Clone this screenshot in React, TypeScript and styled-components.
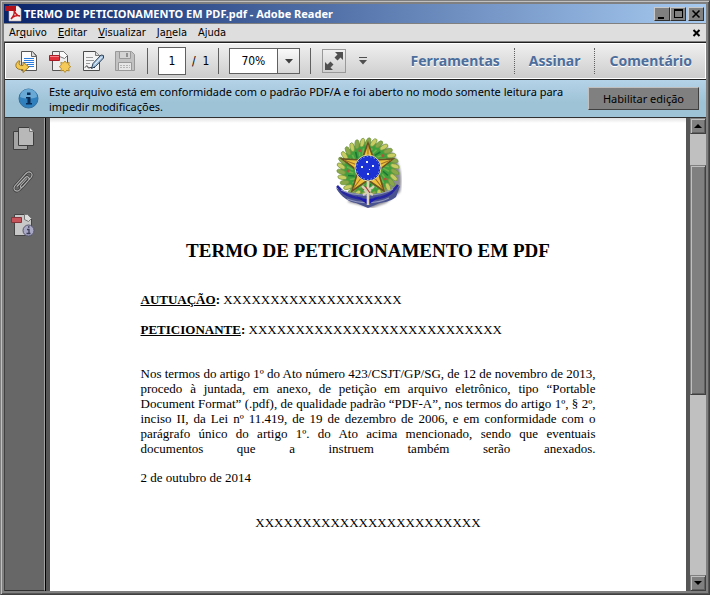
import React from "react";
import styled, { createGlobalStyle } from "styled-components";

const UI = `"DejaVu Sans Condensed", "Noto Sans", Tahoma, sans-serif`;
const UI_WIDE = `"Noto Sans", "Open Sans", sans-serif`;
const SERIF = `"Liberation Serif", "Times New Roman", serif`;

const GlobalStyle = createGlobalStyle`
  * { box-sizing: border-box; }
  body { margin: 0; background: #808080; }
  button, input, select { font: inherit; color: inherit; margin: 0; border-radius: 0; }
`;

const Window = styled.div`
  display: flex;
  flex-direction: column;
  height: 100vh;
  padding: 2px 2px 3px 2px;
  background: #808080;
  border: 1px solid;
  border-color: #808080 #404040 #404040 #808080;
  box-shadow: inset 1px 1px 0 #c0c0c0, inset -1px -1px 0 #555555;
  font: 12px/16px ${UI};
  color: #000000;
`;

const TitleBar = styled.header`
  display: flex;
  align-items: center;
  flex: none;
  height: 19px;
  margin: 1px 1px 0;
  padding: 0 2px 0 1px;
  background: linear-gradient(90deg, #0a246a, #a6caf0);
`;

const TitleText = styled.h1`
  flex: 1;
  margin: 0 0 0 2px;
  font: bold 11px/16px ${UI_WIDE};
  color: #ffffff;
  white-space: nowrap;
`;

const CaptionButton = styled.button<{ $apart?: boolean }>`
  display: flex;
  align-items: center;
  justify-content: center;
  width: 16px;
  height: 14px;
  margin-left: ${(p) => (p.$apart ? 2 : 0)}px;
  padding: 0;
  background: #808080;
  border: 1px solid;
  border-color: #c8c8c8 #303030 #303030 #c8c8c8;
`;

const MenuBar = styled.nav`
  display: flex;
  align-items: center;
  flex: none;
  gap: 11px;
  height: 19px;
  margin: 0 1px;
  padding: 0 5px;
  background: #dedede;
  border-top: 1px solid #808080;
  border-bottom: 1px solid #808080;
`;

const MenuItem = styled.button`
  padding: 0;
  background: none;
  border: 0;
  font: 11px/16px ${UI};
  &:last-child { margin-left: auto; display: flex; }
  u { text-underline-offset: 1px; }
`;

const Body = styled.div`
  display: flex;
  flex-direction: column;
  flex: 1;
  min-height: 0;
  margin: 0 1px;
  border-left: 1px solid #404040;
`;

const ToolBar = styled.div`
  display: flex;
  align-items: center;
  flex: none;
  height: 38px;
  padding: 0 14px 0 10px;
  background: linear-gradient(#f0f0f0, #cccccc);
  border-top: 1px solid #202020;
  border-bottom: 1px solid #202020;
  box-shadow: inset 0 0 0 1px #ffffff;
`;

const ToolButton = styled.button<{ $framed?: boolean }>`
  display: flex;
  align-items: center;
  justify-content: center;
  flex: none;
  width: 24px;
  height: 24px;
  margin: ${(p) => (p.$framed ? "0 5px 0 11px" : "0 9px 0 0")};
  padding: 0;
  background: ${(p) => (p.$framed ? "linear-gradient(#efefef, #d0d0d0)" : "none")};
  border: ${(p) => (p.$framed ? "1px solid #999999" : "0")};
`;

const Separator = styled.span`
  flex: none;
  width: 1px;
  height: 26px;
  background: #606060;
`;

const PageField = styled.label`
  display: flex;
  align-items: center;
  gap: 6px;
  margin: 0 9px 0 10px;
  white-space: nowrap;
  input {
    width: 28px;
    height: 28px;
    padding: 0;
    text-align: center;
    background: #ffffff;
    border: 1px solid #606060;
  }
`;

const ZoomBox = styled.div`
  display: flex;
  flex: none;
  width: 71px;
  height: 26px;
  margin: 0 10px;
  background: #ffffff;
  border: 1px solid #606060;
  position: relative;
  select {
    flex: 1;
    padding: 0 31px 0 11px;
    appearance: none;
    background: none;
    border: 0;
  }
`;

const ZoomArrow = styled.span`
  position: absolute;
  top: 0;
  right: 0;
  bottom: 0;
  display: flex;
  align-items: center;
  justify-content: center;
  width: 22px;
  background: linear-gradient(#fafafa, #d8d8d8);
  border-left: 1px solid #606060;
  pointer-events: none;
`;

const Panels = styled.div`
  display: flex;
  margin-left: auto;
`;

const PanelButton = styled.button`
  height: 26px;
  padding: 0 14px;
  background: none;
  border: 0;
  border-left: 1px dotted #606060;
  font: bold 14px/24px ${UI_WIDE};
  color: #4c6e9c;
  text-shadow: 0 1px 0 #ffffff;
  &:first-child { border-left: 0; }
  &:last-child { padding-right: 0; }
`;

const InfoBar = styled.div`
  display: flex;
  align-items: center;
  flex: none;
  height: 38px;
  padding: 0 7px 0 13px;
  background: linear-gradient(#b4d2e8, #9fc3d6 60%);
  border-bottom: 1px solid #303030;
  p {
    flex: 1;
    margin: 0 10px;
    font: 11px/15px ${UI_WIDE};
  }
`;

const EnableButton = styled.button`
  flex: none;
  width: 111px;
  height: 23px;
  padding: 0;
  background: #808080;
  border: 1px solid;
  border-color: #c0c0c0 #404040 #404040 #c0c0c0;
  font: 11px/16px ${UI_WIDE};
`;

const Workspace = styled.div`
  display: flex;
  flex: 1;
  min-height: 0;
`;

const SideBar = styled.aside`
  display: flex;
  flex-direction: column;
  flex: none;
  align-items: center;
  gap: 19px;
  width: 40px;
  padding: 8px 4px 0 0;
  background: #676767;
  border-right: 1px solid #a0a0a0;
  border-bottom: 1px solid #303030;
`;

const SideButton = styled.button`
  display: flex;
  padding: 0;
  background: none;
  border: 0;
`;

const Viewport = styled.div`
  display: flex;
  flex: 1;
  min-width: 0;
  padding: 0 4px;
  background: #555555;
  border-left: 1px solid #000000;
  overflow: hidden;
`;

const Paper = styled.article`
  flex: 1;
  min-width: 0;
  background: linear-gradient(#e2e2e2, #ffffff 5px);
`;

const Column = styled.div`
  display: flex;
  flex-direction: column;
  max-width: 455px;
  margin: 0 auto;
  padding-top: 18px;
  font: 13px/15px ${SERIF};
`;

const Crest = styled.div`
  display: flex;
  justify-content: center;
`;

const Heading = styled.h2`
  margin: 31px 0 29px;
  font: bold 19px/24px ${SERIF};
  text-align: center;
  white-space: nowrap;
`;

const Field = styled.p`
  margin: 0 0 15px;
  text-decoration-thickness: 1px;
`;

const Terms = styled.p`
  margin: 14px 0;
  text-align: justify;
  text-align-last: justify;
`;

const DateLine = styled.p`
  margin: 0 0 30px;
`;

const Signature = styled.p`
  margin: 0;
  text-align: center;
`;

const ScrollBar = styled.div`
  display: flex;
  flex-direction: column;
  flex: none;
  width: 16px;
  background: #c0c0c0;
`;

const ScrollPart = styled.button<{ $thumb?: boolean }>`
  display: flex;
  align-items: center;
  justify-content: center;
  flex: none;
  height: ${(p) => (p.$thumb ? "230px" : "16px")};
  padding: 0;
  background: #808080;
  border: 1px solid;
  border-color: #808080 #404040 #404040 #808080;
  box-shadow: inset 1px 1px 0 #c0c0c0, inset -1px -1px 0 #606060;
`;

const Track = styled.div`
  display: flex;
  flex-direction: column;
  flex: 1;
  min-height: 0;
  padding-top: 31px;
`;

const AdobeMark = () => (
  <svg width="17" height="17" viewBox="0 0 17 17" aria-hidden="true">
    <path d="M4 1h9l3 3v12H4z" fill="#f4eeee" stroke="#b9aaaa" strokeWidth=".6" />
    <path d="M0 1h11v5H0z" fill="#b3121a" />
    <path d="M0 6h2l1 2V6z" fill="#700" />
    <path d="M9 5c1 3 3 6 6 6-3-1-7 0-9 3 2-2 4-6 3-9z" fill="none" stroke="#c4161c" strokeWidth="1.5" />
  </svg>
);

const OpenIcon = () => (
  <svg width="24" height="24" viewBox="0 0 24 24" aria-hidden="true">
    <path d="M6.500 2.500h11l4 4v15h-15z" fill="#fbfbfb" stroke="#555" />
    <path d="M16.500 2.500v5h5l-4-5z" fill="#ddd" stroke="#666" />
    <path d="M9 9.500h10M9 11.500h10M9 13.500h10M12 15.500h7M14 17.500h5" stroke="#2a7de0" strokeWidth="1.200" />
    <path d="M3.500 12C-1 15 0 21.500 8 20.500V23.500l6-5.500-6-5v3.500c-3.500.500-5-1.500-3-4.500z" fill="#f3c94f" stroke="#9a7420" />
  </svg>
);

const CreatePdfIcon = () => (
  <svg width="24" height="24" viewBox="0 0 24 24" aria-hidden="true">
    <path d="M4.500 2.500h11l4 4v15h-15z" fill="#eee" stroke="#555" />
    <path d="M11.500 2.500v5l5 2 3-3-4-4z" fill="#fafafa" stroke="#777" />
    <path d="M1.500 6.500h10v5h-10z" fill="#e2303a" stroke="#a81c25" />
    <path d="M2 7.500h9" stroke="#f58288" />
    <path d="M17 12l1.600 2 2.600-.5-.5 2.600 2 1.600-2 1.600.5 2.600-2.600-.5L17 23.400l-1.600-2-2.600.5.5-2.600-2-1.600 2-1.600-.5-2.600 2.600.5z" fill="#f5ca58" stroke="#a87f22" strokeWidth=".8" />
  </svg>
);

const SignIcon = () => (
  <svg width="24" height="24" viewBox="0 0 24 24" aria-hidden="true">
    <path d="M2.500 2.500h12l4 4v15h-16z" fill="#f4f4f4" stroke="#4c4c4c" />
    <path d="M14.500 2.500v4h4" fill="#ddd" stroke="#777" />
    <path d="M5 8.500h7M5 11.500h8M5 14.500h4" stroke="#999" />
    <path d="M4 18.500c2-3 3-1 3 0s2 0 3 0h4" fill="none" stroke="#222" />
    <path d="M10.500 19.500l1.500-5 8-8.500 2.500.500v2.500l-8 8.500z" fill="#a8c6e4" stroke="#2f4356" />
    <path d="M13.500 15.500l7-7.500" stroke="#eef6fc" />
  </svg>
);

const SaveIcon = () => (
  <svg width="24" height="24" viewBox="0 0 24 24" aria-hidden="true">
    <path d="M1.500 2.500h16l3 3v16h-19z" fill="#c2c2c2" stroke="#999" />
    <path d="M5.500 2.500h11v7h-11z" fill="#d4d4d4" stroke="#999" />
    <path d="M13 4v4" stroke="#909090" strokeWidth="2" />
    <path d="M4.500 13.500h13v8h-13z" fill="#e6e6e6" stroke="#999" />
    <path d="M6 16.500h10M6 18.500h10" stroke="#b4b4b4" strokeDasharray="2 1" />
  </svg>
);

const FullScreenIcon = () => (
  <svg width="22" height="22" viewBox="0 0 22 22" aria-hidden="true">
    <path d="M12 2h8v8l-2.500-2.500-3 3-3-3 3-3zM2 20v-8l2.500 2.500 3-3 3 3-3 3L10 20z" fill="#505050" />
  </svg>
);

const InfoIcon = () => (
  <svg width="21" height="21" viewBox="0 0 21 21" aria-hidden="true">
    <circle cx="10.500" cy="10.500" r="9.500" fill="#2f80bd" stroke="#336f9c" />
    <path d="M2 9a8.500 8 0 0 1 17 0c-5 2-12 2-17 0z" fill="#69a9d6" />
    <path d="M9 4.500h3.500v2.500H9zM8 9h4.500v6H14v1.500H8V15h1.500v-4.500H8z" fill="#0b2d55" />
  </svg>
);

const PagesIcon = () => (
  <svg width="24" height="25" viewBox="0 0 24 25" aria-hidden="true">
    <path d="M2.500 5.500h14v18h-14z" fill="#a4a4a4" stroke="#3e3e3e" />
    <path d="M7.500 1.500h11l4 4v14h-15z" fill="#b8b8b8" stroke="#3e3e3e" />
    <path d="M18.500 1.500v4h4" fill="#ddd" stroke="#777" />
  </svg>
);

const CLIP_PATH =
  "M6 16.500l8.500-9c2-2 5 .5 3 2.800L9 19.500c-3 3.500-8 .5-5.200-3.500L15 3.500c3.500-3.500 8 0 5 4L12 16.500c-2 2-3.500.5-2-1.500l6-6.500";

const ClipIcon = () => (
  <svg width="24" height="24" viewBox="0 0 24 24" fill="none" aria-hidden="true">
    <path d={CLIP_PATH} stroke="#3e3e3e" strokeWidth="2.600" />
    <path d={CLIP_PATH} stroke="#b4b4b4" strokeWidth="1.100" />
  </svg>
);

const DocInfoIcon = () => (
  <svg width="24" height="24" viewBox="0 0 24 24" aria-hidden="true">
    <path d="M3.500 1.500h13l4 4v17h-17z" fill="#c8c8c8" stroke="#444" />
    <path d="M13.500 1.500v5l4 2 3-3-4-4z" fill="#ddd" stroke="#777" />
    <path d="M.5 4.500h10v5H.5z" fill="#c6535a" stroke="#87343a" />
    <circle cx="17.500" cy="17.500" r="5.500" fill="#a9a9c6" stroke="#55556c" />
    <path d="M17 14h1.500M16 16.500h2v4M15.500 20.500h4" fill="none" stroke="#3c3c58" strokeWidth="1.300" />
  </svg>
);

const LEAVES = Array.from({ length: 30 }, (_, i) => i * 12);

const BrazilCrest = () => (
  <svg width="68" height="72" viewBox="0 0 68 72" role="img" aria-label="Brasão da República">
    <defs>
      <filter id="soft" x="-10%" y="-10%" width="120%" height="120%">
        <feGaussianBlur stdDeviation="0.600" />
      </filter>
      <filter id="shade" x="-10%" y="-10%" width="120%" height="120%">
        <feGaussianBlur stdDeviation="1.200" />
      </filter>
    </defs>
    <path d="M48 8c16 8 22 30 18 48L52 67 38 72 14 66z" fill="#8c8c94" filter="url(#shade)" />
    <g filter="url(#soft)">
      <circle cx="34" cy="33" r="27" fill="#3f9f3c" />
      {LEAVES.map((a) => (
        <g key={a} transform={`rotate(${a} 34 33)`}>
          <ellipse cx="34" cy="6" rx="2.200" ry="4.500" transform="rotate(25 34 6)" fill={a % 24 ? "#c9cc62" : "#8aa848"} stroke="#6f9440" strokeWidth=".7" />
          <path d="M34 12l-2.500 6" stroke={a % 36 ? "#6db24a" : "#1f7434"} strokeWidth="1.600" />
          {a % 72 === 48 && <circle cx="34" cy="13" r="1.500" fill="#b0543a" />}
        </g>
      ))}
      <path d="M34 7l6 17 19-1-15 12 6 20-16-11-16 11 6-20L8 23l20 1z" fill="#efc13a" stroke="#6a5224" strokeWidth="1.600" />
      <path d="M34 9v24l23-9-23 9 15 20-15-20-15 20 15-20L10 24l24 9z" fill="none" stroke="#a2712a" strokeWidth="1.100" />
      <path d="M2 52c8 4 19 6 32 6s24-2 32-8l-4 11c-7 5-11 5-16 6l-12 5-12-5C15 66 7 61 2 52z" fill="#4a5290" />
      <path d="M3 50l7 7c6 4 12 5 18 6M64 49l-7 8c-5 4-11 5-17 6" fill="none" stroke="#2626a0" strokeWidth="2.600" />
      <path d="M7 54c15 7 38 7 52-1M13 63c13 5 30 5 42-1" fill="none" stroke="#9197bc" strokeWidth="1.200" />
      <path d="M22 60c8 4 16 4 24 0l-12 9z" fill="#1a1ab4" />
      <path d="M34 45v24" stroke="#dcd4b4" strokeWidth="2.600" />
      <path d="M28 50c3 4 9 4 12 0M29 59l8-5M30 54l9 5" fill="none" stroke="#d8cfb6" strokeWidth="2.200" />
      <path d="M31 50l5 7" stroke="#a53a37" strokeWidth="1.200" />
      <circle cx="34" cy="32" r="13" fill="#132bb7" stroke="#e7d88a" strokeWidth="1" />
      <circle cx="34" cy="32" r="11.500" fill="#1b32d4" stroke="#93a3ee" strokeWidth="1" strokeDasharray="1.500 2" />
      <path d="M32 25h2v2h-2zM27 30h2v2h-2zM38 29h2v2h-2zM33 37h2v2h-2zM35 33h1v1h-1z" fill="#edf3ff" />
    </g>
  </svg>
);

const MENUS = [
  ["Ar", "q", "uivo"],
  ["", "E", "ditar"],
  ["", "V", "isualizar"],
  ["Ja", "n", "ela"],
  ["A", "j", "uda"],
];

const TERMS = [
  "Nos termos do artigo 1º do Ato número 423/CSJT/GP/SG, de 12 de novembro de 2013,",
  "procedo à juntada, em anexo, de petição em arquivo eletrônico, tipo “Portable",
  "Document Format” (.pdf), de qualidade padrão “PDF-A”, nos termos do artigo 1º, § 2º,",
  "inciso II, da Lei nº 11.419, de 19 de dezembro de 2006, e em conformidade com o",
  "parágrafo único do artigo 1º. do Ato acima mencionado, sendo que eventuais",
  "documentos que a instruem também serão anexados.",
].join(" ");

export default function App() {
  return (
    <Window>
      <GlobalStyle />
      <TitleBar>
        <AdobeMark />
        <TitleText>TERMO DE PETICIONAMENTO EM PDF.pdf - Adobe Reader</TitleText>
        <CaptionButton aria-label="Minimizar">
          <svg width="12" height="12" viewBox="0 0 12 12"><path d="M2 9h6v2H2z" /></svg>
        </CaptionButton>
        <CaptionButton aria-label="Maximizar">
          <svg width="12" height="12" viewBox="0 0 12 12"><path d="M2 1h9v9H2zM3 3v6h7V3z" fillRule="evenodd" /></svg>
        </CaptionButton>
        <CaptionButton aria-label="Fechar" $apart>
          <svg width="12" height="12" viewBox="0 0 12 12"><path d="M2.500 2.500l7 7M9.500 2.500l-7 7" stroke="#000" strokeWidth="1.600" /></svg>
        </CaptionButton>
      </TitleBar>
      <MenuBar>
        {MENUS.map(([before, key, after]) => (
          <MenuItem key={after}>{before}<u>{key}</u>{after}</MenuItem>
        ))}
        <MenuItem aria-label="Fechar documento">
          <svg width="9" height="8" viewBox="0 0 9 8"><path d="M1.500 1l6 6M7.500 1l-6 6" stroke="#000" strokeWidth="2" /></svg>
        </MenuItem>
      </MenuBar>
      <Body>
        <ToolBar>
          <ToolButton aria-label="Abrir"><OpenIcon /></ToolButton>
          <ToolButton aria-label="Criar PDF"><CreatePdfIcon /></ToolButton>
          <ToolButton aria-label="Assinar documento"><SignIcon /></ToolButton>
          <ToolButton aria-label="Salvar" disabled><SaveIcon /></ToolButton>
          <Separator />
          <PageField>
            <input aria-label="Página" defaultValue="1" />
            <span>/&nbsp; 1</span>
          </PageField>
          <Separator />
          <ZoomBox>
            <select aria-label="Zoom" defaultValue="70%">
              <option>70%</option>
              <option>100%</option>
            </select>
            <ZoomArrow>
              <svg width="8" height="5" viewBox="0 0 8 5"><path d="M0 0h8L4 4.500z" fill="#404040" /></svg>
            </ZoomArrow>
          </ZoomBox>
          <Separator />
          <ToolButton aria-label="Tela cheia" $framed><FullScreenIcon /></ToolButton>
          <ToolButton aria-label="Mais ferramentas">
            <svg width="8" height="8" viewBox="0 0 8 8"><path d="M0 0h8v1H0zM0 3h8L4 7.500z" fill="#505050" /></svg>
          </ToolButton>
          <Panels>
            <PanelButton>Ferramentas</PanelButton>
            <PanelButton>Assinar</PanelButton>
            <PanelButton>Comentário</PanelButton>
          </Panels>
        </ToolBar>
        <InfoBar>
          <InfoIcon />
          <p>
            Este arquivo está em conformidade com o padrão PDF/A e foi aberto no modo somente leitura para
            impedir modificações.
          </p>
          <EnableButton>Habilitar edição</EnableButton>
        </InfoBar>
        <Workspace>
          <SideBar>
            <SideButton aria-label="Miniaturas"><PagesIcon /></SideButton>
            <SideButton aria-label="Anexos"><ClipIcon /></SideButton>
            <SideButton aria-label="Padrões"><DocInfoIcon /></SideButton>
          </SideBar>
          <Viewport>
            <Paper>
              <Column>
                <Crest><BrazilCrest /></Crest>
                <Heading>TERMO DE PETICIONAMENTO EM PDF</Heading>
                <Field><b><u>AUTUAÇÃO</u>:</b> XXXXXXXXXXXXXXXXXXX</Field>
                <Field><b><u>PETICIONANTE</u>:</b> XXXXXXXXXXXXXXXXXXXXXXXXXXX</Field>
                <Terms>{TERMS}</Terms>
                <DateLine>2 de outubro de 2014</DateLine>
                <Signature>XXXXXXXXXXXXXXXXXXXXXXXX</Signature>
              </Column>
            </Paper>
          </Viewport>
          <ScrollBar>
            <ScrollPart aria-label="Rolar para cima">
              <svg width="8" height="4" viewBox="0 0 8 4"><path d="M4 0l4 4H0z" /></svg>
            </ScrollPart>
            <Track>
              <ScrollPart $thumb aria-label="Posição da página" />
            </Track>
            <ScrollPart aria-label="Rolar para baixo">
              <svg width="8" height="4" viewBox="0 0 8 4"><path d="M0 0h8L4 4z" /></svg>
            </ScrollPart>
          </ScrollBar>
        </Workspace>
      </Body>
    </Window>
  );
}
